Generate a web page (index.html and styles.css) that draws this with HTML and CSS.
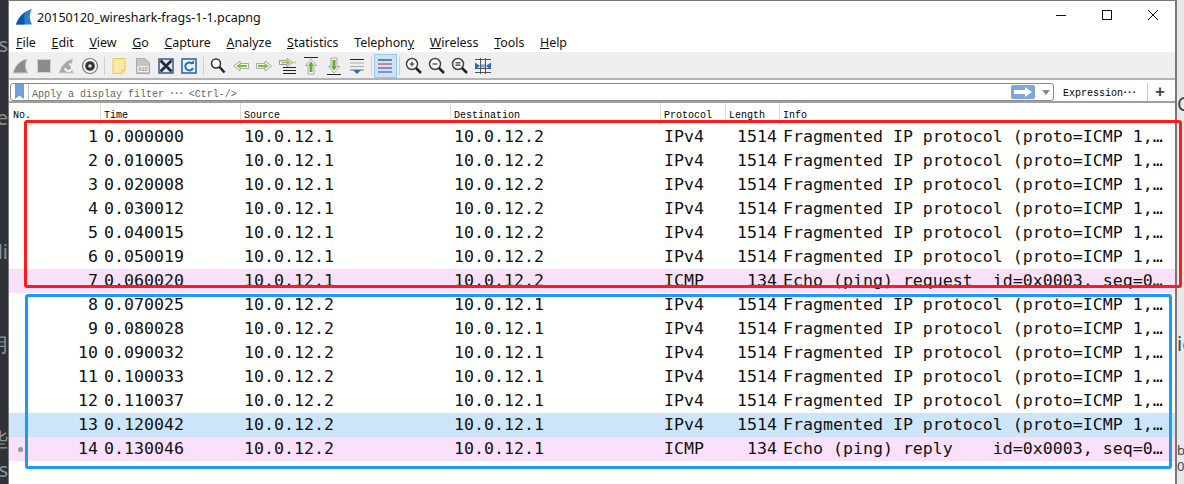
FILE: index.html
```html
<!DOCTYPE html>
<html>

<head>
    <meta charset="utf-8">
    <title>20150120_wireshark-frags-1-1.pcapng</title>
    <link rel="stylesheet" href="styles.css">
</head>

<body>
    <div class="strip strip-left">
        <span class="frag f1">'s</span>
        <span class="frag f2">e</span>
        <span class="frag f3">li</span>
        <span class="frag f4">用</span>
        <span class="frag f5">些</span>
        <span class="frag f6">ffs</span>
    </div>

    <div class="window">
        <div class="titlebar">
            <svg class="logo" viewBox="0 0 16 16" width="16" height="16">
                <path d="M0 15.500 C2 8 8 2 16 0 C13 5 13 10 16 15.500 Z" fill="#2a7fd0" />
                <path d="M0 15.500 C2 10 5 6 9 3.500 C8 8 8 12 9 15.500 Z" fill="#0f56a8" />
            </svg>
            <span class="title">20150120_wireshark-frags-1-1.pcapng</span>
            <div class="winctl">
                <svg viewBox="0 0 12 12" width="12" height="12"><path d="M1 6.500H11" stroke="#111" fill="none" /></svg>
                <svg viewBox="0 0 12 12" width="12" height="12"><rect x="1.500" y="1.500" width="9" height="9" stroke="#111" fill="none" /></svg>
                <svg viewBox="0 0 12 12" width="12" height="12"><path d="M1 1L11 11M11 1L1 11" stroke="#111" fill="none" /></svg>
            </div>
        </div>

        <div class="menubar">
            <span><u>F</u>ile</span>
            <span><u>E</u>dit</span>
            <span><u>V</u>iew</span>
            <span><u>G</u>o</span>
            <span><u>C</u>apture</span>
            <span><u>A</u>nalyze</span>
            <span><u>S</u>tatistics</span>
            <span>Telephon<u>y</u></span>
            <span><u>W</u>ireless</span>
            <span><u>T</u>ools</span>
            <span><u>H</u>elp</span>
        </div>

        <div class="toolbar">
            <div class="tool"><svg viewBox="0 0 20 20"><path d="M2 17 C4 10 9 4 16 3 C14 8 14 13 17 17 Z" fill="#8c8c8c" stroke="#cfcfcf" /></svg></div>
            <div class="tool"><svg viewBox="0 0 20 20"><rect x="3.500" y="3.500" width="13" height="13" fill="#8c8c8c" stroke="#cfcfcf" /></svg></div>
            <div class="tool"><svg viewBox="0 0 20 20"><path d="M2 17 C4 10 9 4 16 3 C14 8 14 13 17 17 Z" fill="#a8a8a8" stroke="#d4d4d4" /><path d="M12 8 A3.500 3.500 0 1 1 8 12" fill="none" stroke="#f2f2f2" stroke-width="2" /></svg></div>
            <div class="tool"><svg viewBox="0 0 20 20"><circle cx="10" cy="10" r="7.500" fill="#f4f4f4" stroke="#777" stroke-width="1.200" /><circle cx="10" cy="10" r="4.800" fill="#333" /><circle cx="10" cy="10" r="1.800" fill="#ddd" /></svg></div>
            <div class="sep"></div>
            <div class="tool"><svg viewBox="0 0 20 20"><path d="M4 2.500H16V14L13 17.500H4Z" fill="#fde9a5" stroke="#f0c64e" /><path d="M13 17.500V14H16" fill="none" stroke="#f0c64e" /></svg></div>
            <div class="tool"><svg viewBox="0 0 20 20"><path d="M3.500 2.500H12L16.500 7V17.500H3.500Z" fill="#c4c4c4" stroke="#aaa" /><rect x="4.500" y="10" width="11" height="6" fill="#eee" /><text x="10" y="15" class="tiny">010</text></svg></div>
            <div class="tool"><svg viewBox="0 0 20 20"><path d="M3 3H17V17H3Z" fill="#dfe8f2" stroke="#2b5f95" stroke-width="1.500" /><path d="M4.500 4.500L15.500 15.500M15.500 4.500L4.500 15.500" stroke="#2a2a2a" stroke-width="2.800" /></svg></div>
            <div class="tool"><svg viewBox="0 0 20 20"><rect x="3" y="3" width="14" height="14" fill="#eaf2fb" stroke="#2b5f95" stroke-width="1.500" /><path d="M13.500 8 A4 4 0 1 0 14 12" fill="none" stroke="#1d6fc7" stroke-width="2" /><path d="M11 8H15V4Z" fill="#1d6fc7" /></svg></div>
            <div class="sep"></div>
            <div class="tool"><svg viewBox="0 0 20 20"><circle cx="8" cy="7.500" r="4.500" fill="#fff" stroke="#333" stroke-width="1.500" /><path d="M11.500 11L16.500 16.500" stroke="#222" stroke-width="2.500" /></svg></div>
            <div class="tool"><svg viewBox="0 0 20 20"><path d="M2.500 10L9 5V7.500H17.500V12.500H9V15Z" fill="#f4f4f4" stroke="#aaa" /><path d="M5 10L9.500 7.500V9H16V11H9.500V12.500Z" fill="#7fbf2a" /></svg></div>
            <div class="tool"><svg viewBox="0 0 20 20"><path d="M17.500 10L11 5V7.500H2.500V12.500H11V15Z" fill="#f4f4f4" stroke="#aaa" /><path d="M15 10L10.500 7.500V9H4V11H10.500V12.500Z" fill="#7fbf2a" /></svg></div>
            <div class="tool"><svg viewBox="0 0 20 20"><path d="M5 11.500H18M5 14.500H18M5 17.500H18" stroke="#222" /><path d="M14.500 6.500L9 2.500V4.500H1.500V8.500H9V10.500Z" fill="#f4f4f4" stroke="#999" /><path d="M12.500 6.500L9 4.500V5.800H3.500V7.200H9V8.500Z" fill="#7fbf2a" /><rect x="15" y="5" width="3" height="3" fill="#f5e050" /></svg></div>
            <div class="tool"><svg viewBox="0 0 20 20"><path d="M3 1.500H17" stroke="#222" /><path d="M10 3L15.500 9.500H13V18H7V9.500H4.500Z" fill="#f4f4f4" stroke="#aaa" /><path d="M10 5.500L13 9.500H11.500V16H8.500V9.500H7Z" fill="#5eb02e" /></svg></div>
            <div class="tool"><svg viewBox="0 0 20 20"><path d="M3 18.500H17" stroke="#222" /><path d="M10 17L15.500 10.500H13V2H7V10.500H4.500Z" fill="#f4f4f4" stroke="#aaa" /><path d="M10 14.500L13 10.500H11.500V4H8.500V10.500H7Z" fill="#5eb02e" /></svg></div>
            <div class="tool"><svg viewBox="0 0 20 20"><path d="M3 3.500H17" stroke="#222" /><path d="M3 7H17M3 10.500H17" stroke="#aaa" /><path d="M3 14H17" stroke="#777" /><path d="M6 14H14L10 18Z" fill="#2a6ebb" /></svg></div>
            <div class="sep sep-thin"></div>
            <div class="tool tool-on"><svg viewBox="0 0 20 20"><path d="M3 4H17" stroke="#222" /><path d="M3 8H17" stroke="#d8232a" /><path d="M3 12H17" stroke="#26418f" /><path d="M3 16H17" stroke="#6a2f87" /></svg></div>
            <div class="sep sep-thin"></div>
            <div class="tool"><svg viewBox="0 0 20 20"><circle cx="8" cy="8" r="5.500" fill="#fff" stroke="#444" stroke-width="1.500" /><path d="M5.500 8H10.500M8 5.500V10.500" stroke="#333" stroke-width="1.200" /><path d="M12 12L17 17" stroke="#222" stroke-width="2.500" /></svg></div>
            <div class="tool"><svg viewBox="0 0 20 20"><circle cx="8" cy="8" r="5.500" fill="#fff" stroke="#444" stroke-width="1.500" /><path d="M5.500 8H10.500" stroke="#333" stroke-width="1.200" /><path d="M12 12L17 17" stroke="#222" stroke-width="2.500" /></svg></div>
            <div class="tool"><svg viewBox="0 0 20 20"><circle cx="8" cy="8" r="5.500" fill="#fff" stroke="#444" stroke-width="1.500" /><path d="M5.500 6.800H10.500M5.500 9.200H10.500" stroke="#333" stroke-width="1.200" /><path d="M12 12L17 17" stroke="#222" stroke-width="2.500" /></svg></div>
            <div class="tool"><svg viewBox="0 0 20 20"><path d="M2 3.500H18M2 16.500H18M2 12.500H18" stroke="#555" /><path d="M7.500 2V18M12.500 2V18" stroke="#555" /><path d="M2 6.500L7 10L2 13.500ZM18 6.500L13 10L18 13.500Z" fill="#2a6ebb" /><rect x="7" y="8.500" width="6" height="3" fill="#2a6ebb" opacity=".6" /></svg></div>
        </div>

        <div class="filterbar">
            <div class="filter">
                <div class="bookmark">
                    <svg viewBox="0 0 10 15" width="10" height="15"><path d="M0 0H9V15L4.500 11.500L0 15Z" fill="#6f9fd8" /></svg>
                </div>
                <span class="filter-hint">Apply a display filter <span class="dots">…</span> &lt;Ctrl-/&gt;</span>
                <div class="apply">
                    <svg viewBox="0 0 18 10" width="18" height="10"><path d="M0 3H11V0L18 5L11 10V7H0Z" fill="#fff" /></svg>
                </div>
                <div class="drop"></div>
            </div>
            <span class="expr">Expression<span class="dots">…</span></span>
            <span class="plus">+</span>
        </div>

        <div class="row head">
            <div>No.</div>
            <div>Time</div>
            <div>Source</div>
            <div>Destination</div>
            <div>Protocol</div>
            <div>Length</div>
            <div>Info</div>
        </div>

        <div class="packets">
            <div class="row">
                <div class="no">1</div><div>0.000000</div><div>10.0.12.1</div><div>10.0.12.2</div><div>IPv4</div><div class="len">1514</div><div>Fragmented IP protocol (proto=ICMP 1,…</div>
            </div>
            <div class="row">
                <div class="no">2</div><div>0.010005</div><div>10.0.12.1</div><div>10.0.12.2</div><div>IPv4</div><div class="len">1514</div><div>Fragmented IP protocol (proto=ICMP 1,…</div>
            </div>
            <div class="row">
                <div class="no">3</div><div>0.020008</div><div>10.0.12.1</div><div>10.0.12.2</div><div>IPv4</div><div class="len">1514</div><div>Fragmented IP protocol (proto=ICMP 1,…</div>
            </div>
            <div class="row">
                <div class="no">4</div><div>0.030012</div><div>10.0.12.1</div><div>10.0.12.2</div><div>IPv4</div><div class="len">1514</div><div>Fragmented IP protocol (proto=ICMP 1,…</div>
            </div>
            <div class="row">
                <div class="no">5</div><div>0.040015</div><div>10.0.12.1</div><div>10.0.12.2</div><div>IPv4</div><div class="len">1514</div><div>Fragmented IP protocol (proto=ICMP 1,…</div>
            </div>
            <div class="row">
                <div class="no">6</div><div>0.050019</div><div>10.0.12.1</div><div>10.0.12.2</div><div>IPv4</div><div class="len">1514</div><div>Fragmented IP protocol (proto=ICMP 1,…</div>
            </div>
            <div class="row icmp">
                <div class="no">7</div><div>0.060020</div><div>10.0.12.1</div><div>10.0.12.2</div><div>ICMP</div><div class="len">134</div><div>Echo (ping) request  id=0x0003, seq=0…</div>
            </div>
            <div class="row">
                <div class="no">8</div><div>0.070025</div><div>10.0.12.2</div><div>10.0.12.1</div><div>IPv4</div><div class="len">1514</div><div>Fragmented IP protocol (proto=ICMP 1,…</div>
            </div>
            <div class="row">
                <div class="no">9</div><div>0.080028</div><div>10.0.12.2</div><div>10.0.12.1</div><div>IPv4</div><div class="len">1514</div><div>Fragmented IP protocol (proto=ICMP 1,…</div>
            </div>
            <div class="row">
                <div class="no">10</div><div>0.090032</div><div>10.0.12.2</div><div>10.0.12.1</div><div>IPv4</div><div class="len">1514</div><div>Fragmented IP protocol (proto=ICMP 1,…</div>
            </div>
            <div class="row">
                <div class="no">11</div><div>0.100033</div><div>10.0.12.2</div><div>10.0.12.1</div><div>IPv4</div><div class="len">1514</div><div>Fragmented IP protocol (proto=ICMP 1,…</div>
            </div>
            <div class="row">
                <div class="no">12</div><div>0.110037</div><div>10.0.12.2</div><div>10.0.12.1</div><div>IPv4</div><div class="len">1514</div><div>Fragmented IP protocol (proto=ICMP 1,…</div>
            </div>
            <div class="row selected">
                <div class="no">13</div><div>0.120042</div><div>10.0.12.2</div><div>10.0.12.1</div><div>IPv4</div><div class="len">1514</div><div>Fragmented IP protocol (proto=ICMP 1,…</div>
            </div>
            <div class="row icmp">
                <div class="no"><span class="dot"></span>14</div><div>0.130046</div><div>10.0.12.2</div><div>10.0.12.1</div><div>ICMP</div><div class="len">134</div><div>Echo (ping) reply    id=0x0003, seq=0…</div>
            </div>
        </div>
    </div>

    <div class="strip strip-right">
        <span class="frag r1">C</span>
        <span class="frag r2">ic</span>
        <span class="frag r3">b</span>
        <span class="frag r4">0.</span>
    </div>

    <!-- annotation boxes drawn over the list -->
    <div class="mark mark-red"></div>
    <div class="mark mark-blue"></div>
</body>

</html>
```

FILE: styles.css
```css
* {
    margin: 0;
    padding: 0;
    box-sizing: border-box;
}

html,
body {
    width: 1184px;
    height: 484px;
    overflow: hidden;
}

body {
    display: flex;
    background: #fff;
    font-family: "Noto Sans", sans-serif;
    color: #111;
    position: relative;
}

.strip {
    width: 8px;
    height: 484px;
    flex: none;
    overflow: hidden;
    display: flex;
    flex-direction: column;
    white-space: nowrap;
    font-size: 20px;
    line-height: 20px;
}

.strip-left {
    background: #2f3337;
    color: #8d9296;
    align-items: flex-end;
}

.strip-right {
    width: 7px;
    background: #e9e9e9;
    color: #444;
    align-items: flex-start;
}

.frag {
    display: block;
}

.f1 { margin-top: 35px; }
.f2 { margin-top: 53px; }
.f3 { margin-top: 114px; }
.f4 { margin-top: 73px; }
.f5 { margin-top: 75px; }
.f6 { margin-top: 10px; }

.r1 { margin-top: 94px; }
.r2 { margin-top: 220px; }
.r3 { margin-top: 89px; font-size: 13px; line-height: 14px; }
.r4 { margin-top: 2px; font-size: 13px; line-height: 14px; }

.window {
    width: 1169px;
    height: 484px;
    flex: none;
    border-top: 1px solid #777;
    border-left: 1px solid #777;
    border-right: 2px solid #777;
    background: #fff;
    display: flex;
    flex-direction: column;
}

.titlebar {
    height: 32px;
    display: flex;
    align-items: center;
    padding-left: 7px;
    flex: none;
}

.logo {
    flex: none;
}

.title {
    margin-left: 5px;
    font-size: 12.5px;
}

.winctl {
    margin-left: auto;
    margin-right: 16px;
    display: flex;
    gap: 34px;
    margin-top: -5px;
}

.menubar {
    height: 20px;
    display: flex;
    align-items: center;
    gap: 15.7px;
    padding-left: 7px;
    font-size: 12.4px;
    flex: none;
    border-bottom: 1px solid #f0f0f0;
}

.toolbar {
    height: 27px;
    flex: none;
    display: flex;
    align-items: center;
    background: #efefef;
    border-bottom: 2px solid #b4b4b4;
}

.tool {
    width: 23.2px;
    height: 24px;
    flex: none;
    display: flex;
    align-items: center;
    justify-content: center;
}

.tool svg {
    width: 20px;
    height: 20px;
}

.tiny {
    font-family: "Liberation Mono", monospace;
    font-size: 5px;
    text-anchor: middle;
    fill: #777;
}

.tool-on {
    background: #cbe3f8;
    border: 1px solid #93c9f5;
}

.sep {
    width: 6px;
    height: 18px;
    flex: none;
    display: flex;
    justify-content: center;
}

.sep::before {
    content: "";
    width: 1px;
    background: #cfcfcf;
}

.sep-thin {
    width: 5px;
}

.filterbar {
    height: 23px;
    flex: none;
    display: flex;
    align-items: flex-end;
    padding-left: 1px;
    border-bottom: 2px solid #a0a0a0;
    font-family: "Liberation Mono", monospace;
    font-size: 10px;
}

.filter {
    width: 1044px;
    height: 18px;
    flex: none;
    display: flex;
    align-items: center;
    border: 1px solid #8a8a8a;
    border-radius: 3px;
    color: #666;
}

.dots {
    font-family: "Noto Sans CJK SC", sans-serif;
    font-size: 12px;
    line-height: 10px;
    vertical-align: 3px;
}

.bookmark {
    width: 18px;
    height: 16px;
    flex: none;
    display: flex;
    justify-content: center;
    border-right: 1px solid #c8c8c8;
}

.filter-hint {
    margin-left: 3px;
    white-space: nowrap;
}

.apply {
    margin-left: auto;
    width: 24px;
    height: 14px;
    flex: none;
    display: flex;
    align-items: center;
    justify-content: center;
    background: #7ba7dc;
    border-radius: 2px;
}

.drop {
    width: 0;
    height: 0;
    margin: 0 3px 0 7px;
    border-left: 4px solid transparent;
    border-right: 4px solid transparent;
    border-top: 5px solid #8a8a8a;
}

.expr {
    margin-left: 9px;
    width: 85px;
    height: 18px;
    flex: none;
    line-height: 18px;
    color: #000;
    white-space: nowrap;
    border-right: 1px solid #ccc;
}

.plus {
    margin-left: 7px;
    font-family: "Liberation Sans", sans-serif;
    font-size: 17px;
    font-weight: bold;
    line-height: 18px;
    color: #444;
}

.row {
    display: grid;
    grid-template-columns: 91px 140px 210px 210px 65px 54px 1fr;
    height: 24px;
    line-height: 24px;
    font-family: "DejaVu Sans Mono", monospace;
    font-size: 16.6px;
    white-space: pre;
    color: #111;
}

.row > div {
    padding-left: 4px;
    overflow: hidden;
}

.row > .no {
    text-align: right;
    padding-right: 2px;
}

.row > .len {
    text-align: right;
    padding-right: 2px;
}

.head {
    height: 22px;
    flex: none;
    line-height: 25px;
    font-family: "Liberation Mono", monospace;
    font-size: 10px;
    color: #000;
}

.head > div + div {
    border-left: 1px solid #ddd;
    padding-left: 3px;
}

.icmp {
    background: #fae0fa;
}

.selected {
    background: #cce5fb;
}

.dot {
    float: left;
    width: 5px;
    height: 5px;
    margin: 10px 0 0 5px;
    border-radius: 50%;
    background: #8f97a0;
}

.mark {
    position: absolute;
    border-style: solid;
    border-radius: 3px;
    pointer-events: none;
}

.mark-red {
    left: 24px;
    top: 120px;
    width: 1158px;
    height: 168px;
    border-width: 3px;
    border-color: #fb1d17;
}

.mark-blue {
    left: 25px;
    top: 294px;
    width: 1147px;
    height: 175px;
    border-width: 3px;
    border-color: #1c9bf6;
}
```
